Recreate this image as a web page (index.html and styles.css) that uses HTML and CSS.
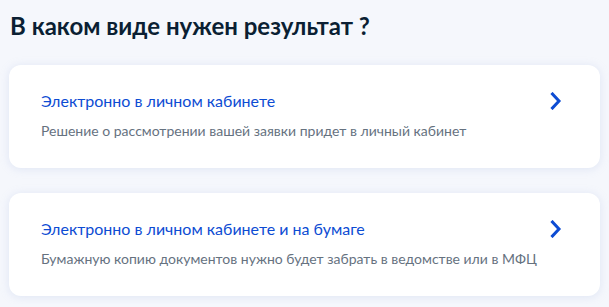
FILE: index.html
```html
<!DOCTYPE html>
<html lang="ru">
<head>
  <meta charset="UTF-8">
  <meta name="viewport" content="width=device-width, initial-scale=1.0">
  <title>Результат</title>
  <link rel="stylesheet" href="styles.css">
</head>
<body>
  <h1 class="question">В каком виде нужен результат ?</h1>

  <!-- Варианты получения результата -->
  <div class="options">
    <a class="option" href="#">
      <div class="option-text">
        <div class="option-title">Электронно в личном кабинете</div>
        <div class="option-desc">Решение о рассмотрении вашей заявки придет в личный кабинет</div>
      </div>
      <svg class="chevron" width="12" height="18" viewBox="0 0 12 18">
        <path d="M2.5 2 L9 9 L2.5 16" fill="none" stroke="#0d4cd3" stroke-width="3" stroke-linecap="square" stroke-linejoin="miter"/>
      </svg>
    </a>

    <a class="option" href="#">
      <div class="option-text">
        <div class="option-title">Электронно в личном кабинете и на бумаге</div>
        <div class="option-desc">Бумажную копию документов нужно будет забрать в ведомстве или в МФЦ</div>
      </div>
      <svg class="chevron" width="12" height="18" viewBox="0 0 12 18">
        <path d="M2.5 2 L9 9 L2.5 16" fill="none" stroke="#0d4cd3" stroke-width="3" stroke-linecap="square" stroke-linejoin="miter"/>
      </svg>
    </a>
  </div>
</body>
</html>
```

FILE: styles.css
```css
* {
  margin: 0;
  padding: 0;
  box-sizing: border-box;
}

body {
  font-family: Lato, "Liberation Sans", sans-serif;
  background-color: #f5f7fc;
  color: #0b1f33;
  padding: 8px 9px;
}

.question {
  font-size: 24px;
  font-weight: 700;
  line-height: 36px;
  padding-left: 1px;
  color: #0b1f33;
}

.options {
  display: flex;
  flex-direction: column;
  gap: 25px;
  margin-top: 21px;
}

.option {
  display: flex;
  align-items: flex-start;
  justify-content: space-between;
  background: #fff;
  border-radius: 12px;
  padding: 24px 38px 27px 32px;
  box-shadow: 0 1px 8px rgba(180, 195, 230, 0.35);
  text-decoration: none;
}

.option-title {
  font-size: 16px;
  line-height: 24px;
  color: #0d4cd3;
}

.option-desc {
  margin-top: 8px;
  font-size: 14px;
  line-height: 20px;
  color: #66727f;
}

.chevron {
  margin-top: 3px;
  flex-shrink: 0;
}
```
